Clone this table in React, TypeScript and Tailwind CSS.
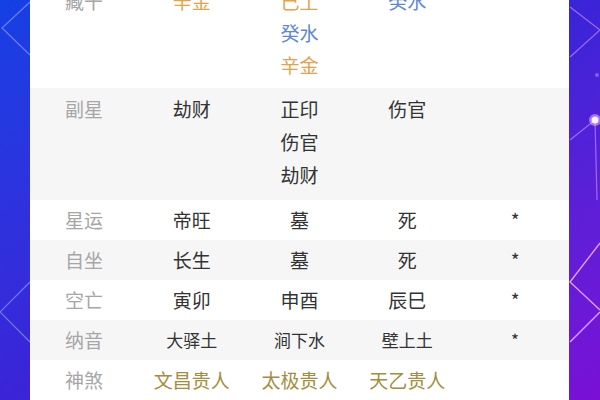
const font = { fontFamily: '"Noto Sans CJK SC", "Noto Sans", sans-serif' };

type Cell = { t: string; c?: string }[];

const GOLD = 'text-[#e3a24c]';
const BLUE = 'text-[#5d88d4]';
const OLIVE = 'text-[#a58d3e]';

const Row = ({
  label,
  cells,
  bg,
  className,
  textSize = 'text-[19px]',
}: {
  label: string;
  cells: Cell[];
  bg: string;
  className: string;
  textSize?: string;
}) => (
  <div className={`grid grid-cols-5 ${bg} ${className}`}>
    <div className="flex flex-col items-center text-[19px] text-[#a6a6a6]">
      <span>{label}</span>
    </div>
    {cells.map((cell, i) => (
      <div key={i} className={`flex flex-col items-center ${textSize}`}>
        {cell.map((line, j) => (
          <span key={j} className={line.c ?? 'text-[#333333]'}>
            {line.t}
          </span>
        ))}
      </div>
    ))}
  </div>
);

const single = 'h-10 items-center leading-10';

export default function App() {
  return (
    <div
      className="relative w-[600px] h-[400px] overflow-hidden bg-linear-to-br from-[#1340e4] via-[#3a24d8] to-[#7a0ed6]"
      style={font}
    >
      <svg className="absolute inset-0" width="600" height="400" viewBox="0 0 600 400" fill="none">
        <g stroke="#7f8cff" strokeWidth="1.2" opacity="0.8">
          <path d="M30 2 L2 28 L30 55" />
          <path d="M30 282 L0 312 L30 342" />
        </g>
        <g stroke="#b27cff" strokeWidth="1.2" opacity="0.8">
          <path d="M570 7 L600 30 L570 57" />
          <path d="M570 140 L595 120 L597 200" />
        </g>
        <g stroke="#e39cff" strokeWidth="1.4">
          <path d="M600 243 L570 282 L600 310" />
          <path d="M600 312 L570 342" />
        </g>
        <circle cx="595" cy="120" r="6" fill="#f6c8ff" opacity="0.5" />
        <circle cx="595" cy="120" r="3.5" fill="#fff0ff" />
        <circle cx="597" cy="75" r="2" fill="#a58cff" opacity="0.6" />
      </svg>

      <div className="relative ml-[30px] w-[539px] h-[400px] bg-white">
        <Row
          label="藏干"
          bg="bg-white"
          className="mt-[-19px] pt-[4px] pb-[7px] leading-[32px]"
          cells={[
            [{ t: '辛金', c: GOLD }],
            [
              { t: '己土', c: GOLD },
              { t: '癸水', c: BLUE },
              { t: '辛金', c: GOLD },
            ],
            [{ t: '癸水', c: BLUE }],
            [],
          ]}
        />
        <Row
          label="副星"
          bg="bg-[#f6f6f6]"
          className="pt-[4px] pb-[9px] leading-[33px]"
          cells={[
            [{ t: '劫财' }],
            [{ t: '正印' }, { t: '伤官' }, { t: '劫财' }],
            [{ t: '伤官' }],
            [],
          ]}
        />
        <Row
          label="星运"
          bg="bg-white"
          className={single}
          cells={[[{ t: '帝旺' }], [{ t: '墓' }], [{ t: '死' }], [{ t: '*' }]]}
        />
        <Row
          label="自坐"
          bg="bg-[#f6f6f6]"
          className={single}
          cells={[[{ t: '长生' }], [{ t: '墓' }], [{ t: '死' }], [{ t: '*' }]]}
        />
        <Row
          label="空亡"
          bg="bg-white"
          className={single}
          cells={[[{ t: '寅卯' }], [{ t: '申酉' }], [{ t: '辰巳' }], [{ t: '*' }]]}
        />
        <Row
          label="纳音"
          bg="bg-[#f6f6f6]"
          className={single}
          textSize="text-[17px]"
          cells={[[{ t: '大驿土' }], [{ t: '涧下水' }], [{ t: '壁上土' }], [{ t: '*' }]]}
        />
        <Row
          label="神煞"
          bg="bg-white"
          className={single}
          cells={[
            [{ t: '文昌贵人', c: OLIVE }],
            [{ t: '太极贵人', c: OLIVE }],
            [{ t: '天乙贵人', c: OLIVE }],
            [],
          ]}
        />
      </div>
    </div>
  );
}
